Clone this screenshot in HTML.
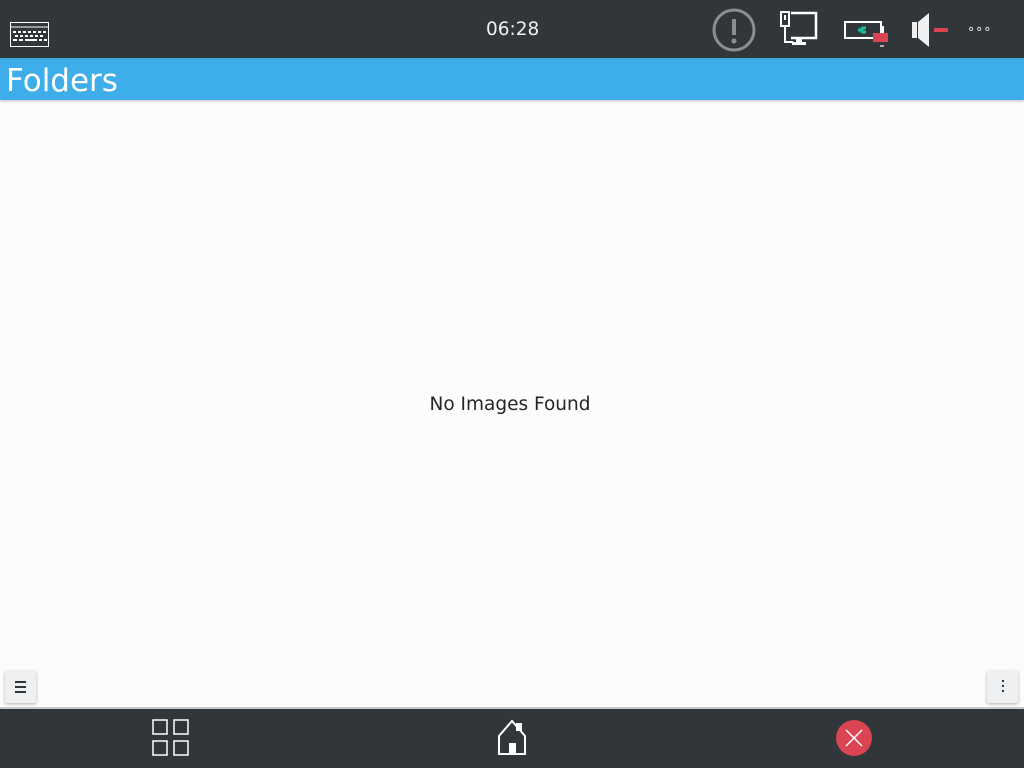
<!DOCTYPE html>
<html><head><style>
body{margin:0;width:1024px;height:768px;background:#fcfcfc;font-family:"Liberation Sans","DejaVu Sans",sans-serif;position:relative;overflow:hidden}
.top{position:absolute;left:0;top:0;width:1024px;height:58px;background:#31363b}
.line{position:absolute;left:0;top:58px;width:1024px;height:2px;background:#3daee9}
.title{position:absolute;left:0;top:60px;width:1024px;height:40px;background:#3daee9;box-shadow:0 1px 3px rgba(0,0,0,.25)}
.title span{position:absolute;left:6px;top:3px;font-size:31px;color:#fff;font-family:"DejaVu Sans",sans-serif}
.clock{position:absolute;left:486px;top:19px;color:#eff0f1;font-size:18.5px;font-family:"DejaVu Sans",sans-serif}
.msg{position:absolute;left:0;width:1020px;top:394px;text-align:center;font-size:18.5px;color:#232627;font-family:"DejaVu Sans",sans-serif}
.bot{position:absolute;left:0;top:707px;width:1024px;height:61px;background:#31363b;border-top:2px solid #c8c8c8;box-sizing:border-box}
.btn{position:absolute;top:671px;width:31px;height:32px;background:#eff0f1;box-shadow:0 1px 3px rgba(0,0,0,.3);border-radius:2px}
</style></head><body>
<div class="top"></div>
<svg style="position:absolute;left:10px;top:22px" width="40" height="26"><rect x="0.5" y="0.5" width="38" height="24" fill="none" stroke="#fff"/><line x1="1" y1="5" x2="38" y2="5" stroke="#fff"/>
<g fill="#fff"><rect x="3" y="9" width="3" height="2"/><rect x="8" y="9" width="3" height="2"/><rect x="13" y="9" width="3" height="2"/><rect x="18" y="9" width="3" height="2"/><rect x="23" y="9" width="3" height="2"/><rect x="28" y="9" width="3" height="2"/><rect x="33" y="9" width="3" height="2"/>
<rect x="5" y="13" width="3" height="2"/><rect x="10" y="13" width="3" height="2"/><rect x="15" y="13" width="3" height="2"/><rect x="20" y="13" width="3" height="2"/><rect x="25" y="13" width="3" height="2"/><rect x="30" y="13" width="3" height="2"/>
<rect x="3" y="17" width="4" height="2"/><rect x="9" y="17" width="4" height="2"/><rect x="15" y="17" width="12" height="2"/><rect x="29" y="17" width="3" height="2"/><rect x="34" y="17" width="3" height="2"/></g></svg>
<div class="clock">06:28</div>
<svg style="position:absolute;left:711px;top:8px" width="46" height="44"><circle cx="23" cy="22" r="20" fill="none" stroke="#8c8f92" stroke-width="3"/><rect x="21" y="11" width="4" height="16" fill="#8c8f92"/><circle cx="23" cy="33" r="2.5" fill="#8c8f92"/></svg>
<svg style="position:absolute;left:780px;top:10px" width="40" height="40"><rect x="1" y="2" width="8" height="14" fill="none" stroke="#fff" stroke-width="2"/><rect x="4" y="5" width="2" height="5" fill="#fff"/><path d="M5 16v16h8" fill="none" stroke="#fff" stroke-width="2"/><path d="M11 3h25v25h-25" fill="none" stroke="#fff" stroke-width="2.5"/><rect x="16" y="28" width="6" height="4" fill="#fff"/><rect x="12" y="32" width="14" height="3" fill="#fff"/></svg>
<svg style="position:absolute;left:843px;top:20px" width="50" height="32"><rect x="2" y="2" width="36" height="16" fill="none" stroke="#fff" stroke-width="2"/><rect x="38" y="6" width="3" height="8" fill="#fff"/><path d="M15 10h4M19 7v6M19 8h4M19 12h4" stroke="#1abc9c" stroke-width="3"/><rect x="30" y="13" width="15" height="9" fill="#da4453"/><rect x="37" y="25" width="4" height="2" fill="#aaa"/></svg>
<svg style="position:absolute;left:911px;top:12px" width="40" height="36"><rect x="1" y="10" width="5" height="16" fill="#eff0f1"/><path d="M7 10L18 1v34L7 26z" fill="#eff0f1"/><rect x="23" y="16" width="14" height="4" fill="#da4453"/></svg>
<div style="position:absolute;left:967px;top:21px;color:#eff0f1;font-size:13px;letter-spacing:0">∘∘∘</div>
<div class="line"></div>
<div class="title"><span>Folders</span></div>
<div class="msg">No Images Found</div>
<div class="btn" style="left:5px"><div style="position:absolute;left:10px;top:10px;width:11px;height:2px;background:#31363b;box-shadow:0 5px 0 #31363b,0 10px 0 #31363b"></div></div>
<div class="btn" style="left:987px"><div style="position:absolute;left:15px;top:9px;width:2px;height:2px;background:#31363b;box-shadow:0 5px 0 #31363b,0 10px 0 #31363b"></div></div>
<div class="bot"></div>
<svg style="position:absolute;left:152px;top:719px" width="40" height="40" fill="none" stroke="#fff" stroke-width="1.5"><rect x="1" y="1" width="14" height="14"/><rect x="22" y="1" width="14" height="14"/><rect x="1" y="22" width="14" height="14"/><rect x="22" y="22" width="14" height="14"/></svg>
<svg style="position:absolute;left:495px;top:719px" width="40" height="40" fill="none" stroke="#fff" stroke-width="2"><path d="M4 17L17 2l13 15v18H4z"/><rect x="15" y="25" width="5" height="10" fill="#fff"/><rect x="22" y="5" width="4" height="6" fill="#fff"/></svg>
<svg style="position:absolute;left:835px;top:719px" width="40" height="40"><circle cx="19" cy="19" r="18" fill="#da4453"/><path d="M11 11l16 16M27 11L11 27" stroke="#fff" stroke-width="1.5"/></svg>
</body></html>
